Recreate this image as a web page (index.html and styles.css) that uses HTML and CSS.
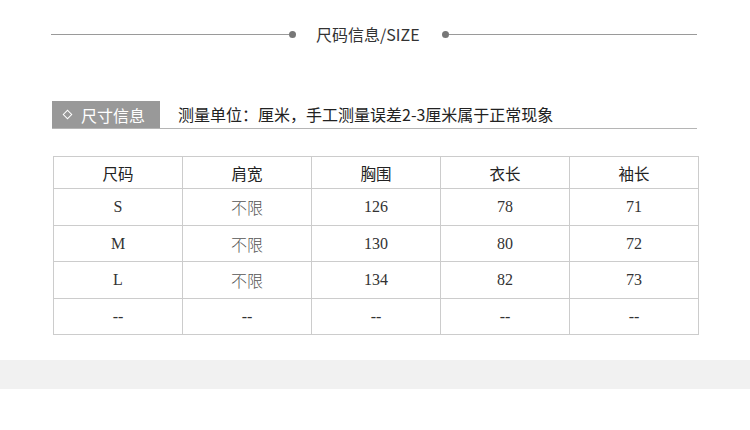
FILE: index.html
```html
<!DOCTYPE html>
<html lang="zh">
<head>
<meta charset="utf-8">
<link rel="stylesheet" href="styles.css">
</head>
<body>
<div class="title">
  <span class="line line-left"></span>
  <span class="dot"></span>
  <span class="title-text">尺码信息/SIZE</span>
  <span class="dot dot-right"></span>
  <span class="line line-right"></span>
</div>
<div class="info">
  <div class="tag"><span class="diamond"></span><span>尺寸信息</span></div>
  <div class="note">测量单位：厘米，手工测量误差2-3厘米属于正常现象</div>
</div>
<table class="size-table">
  <tr class="head"><th>尺码</th><th>肩宽</th><th>胸围</th><th>衣长</th><th>袖长</th></tr>
  <tr class="r1"><td>S</td><td class="cn">不限</td><td>126</td><td>78</td><td>71</td></tr>
  <tr class="r2"><td>M</td><td class="cn">不限</td><td>130</td><td>80</td><td>72</td></tr>
  <tr class="r1"><td>L</td><td class="cn">不限</td><td>134</td><td>82</td><td>73</td></tr>
  <tr class="r2"><td>--</td><td>--</td><td>--</td><td>--</td><td>--</td></tr>
</table>
<div class="band"></div>
</body>
</html>
```

FILE: styles.css
```css
html, body {
  margin: 0;
  padding: 0;
  background: #ffffff;
}
body {
  width: 750px;
  font-family: "Noto Sans CJK SC", "Noto Sans", sans-serif;
  color: #333333;
}
.title {
  display: flex;
  align-items: center;
  height: 20px;
  margin-top: 24px;
  padding-left: 51px;
  width: 646px;
}
.line {
  height: 1px;
  background: #9a9a9a;
}
.line-left {
  width: 238px;
}
.line-right {
  flex: 1;
}
.dot {
  width: 7px;
  height: 7px;
  border-radius: 50%;
  background: #777777;
  flex: none;
}
.title-text {
  font-size: 16px;
  line-height: 20px;
  color: #333333;
  margin: 0 22px 0 20px;
  font-weight: 400;
}
.info {
  display: flex;
  align-items: center;
  margin-top: 57px;
  margin-left: 52px;
  width: 645px;
  height: 27px;
  border-bottom: 1px solid #b5b5b5;
}
.tag {
  display: flex;
  align-items: center;
  width: 108px;
  height: 27px;
  background: #999999;
  color: #ffffff;
  font-size: 16px;
  box-sizing: border-box;
  padding-left: 11px;
}
.diamond {
  width: 5px;
  height: 5px;
  border: 1.3px solid #ffffff;
  transform: rotate(45deg);
  margin-right: 10px;
  margin-left: 1px;
}
.note {
  margin-left: 18px;
  font-size: 16px;
  color: #222222;
  line-height: 27px;
}
.size-table {
  border-collapse: collapse;
  margin-top: 27px;
  margin-left: 53px;
  width: 646px;
  table-layout: fixed;
}
.size-table th, .size-table td {
  border: 1px solid #cccccc;
  text-align: center;
  padding: 0;
}
.size-table th {
  height: 31px;
  font-size: 15.5px;
  font-weight: 400;
  color: #222222;
}
.size-table td {
  font-family: "Liberation Serif", "Noto Sans CJK SC", serif;
  font-size: 16px;
  color: #333333;
}
.size-table td.cn {
  font-family: "Noto Sans CJK SC", sans-serif;
  font-weight: 300;
  font-size: 16px;
  color: #555555;
}
.r1 td {
  height: 36px;
}
.r2 td {
  height: 35px;
}
.band {
  margin-top: 25px;
  height: 29px;
  background: #f1f1f1;
}
```
